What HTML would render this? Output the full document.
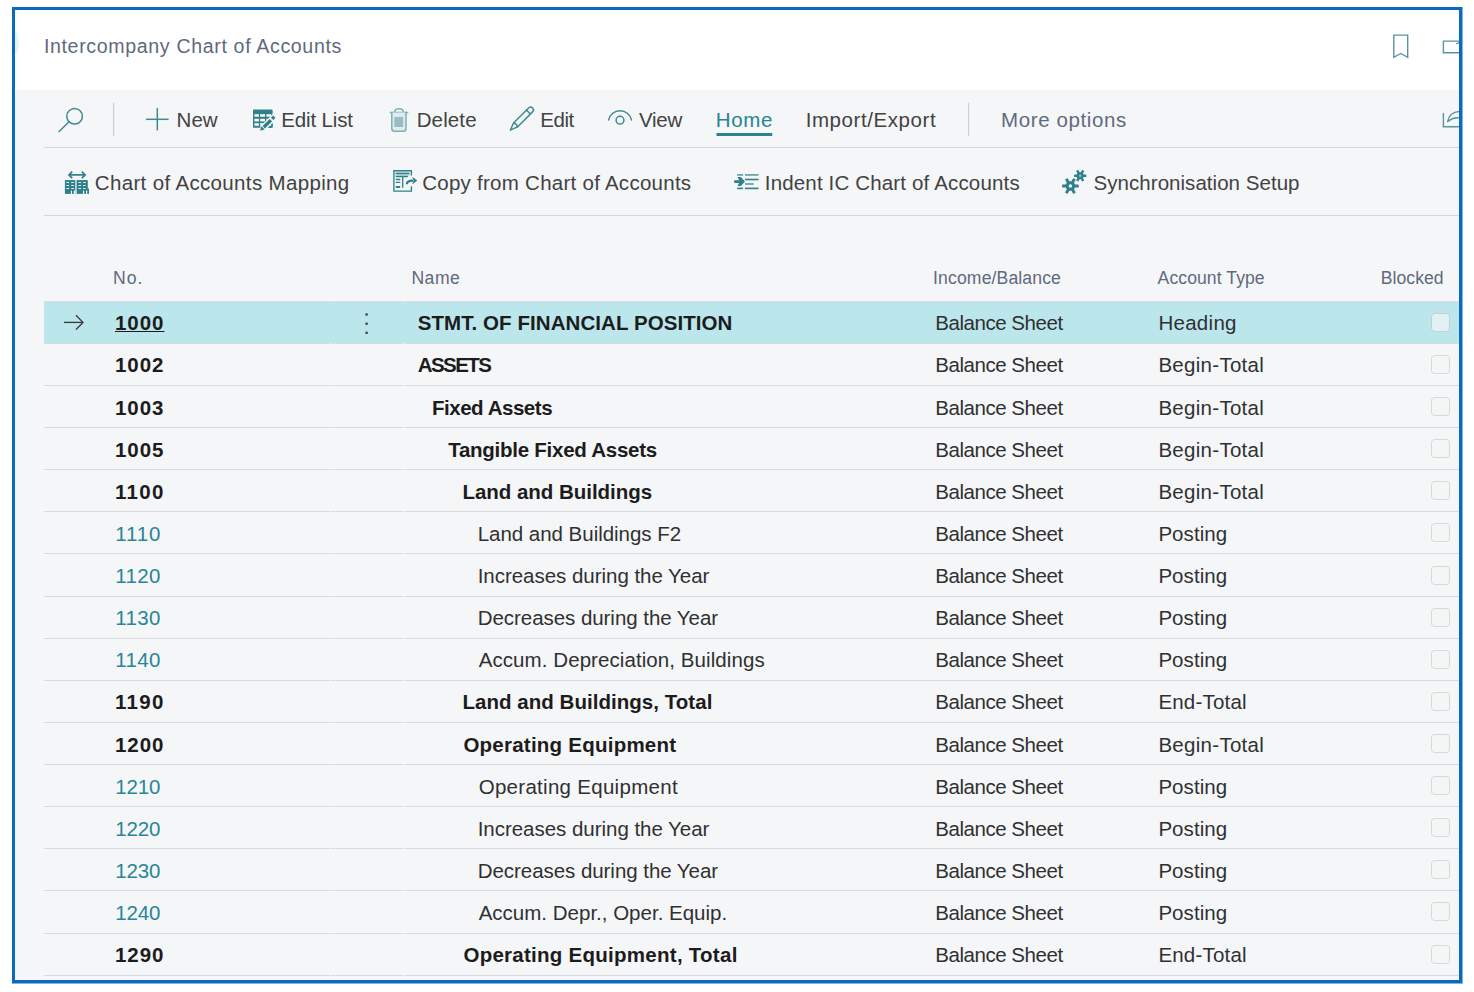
<!DOCTYPE html><html lang="en"><head><meta charset="utf-8"><title>Intercompany Chart of Accounts</title>
<style>
html,body{margin:0;padding:0;background:#fff;}
body{width:1474px;height:992px;position:relative;overflow:hidden;font-family:"Liberation Sans", sans-serif;}
.t{position:absolute;white-space:nowrap;line-height:24px;font-family:"Liberation Sans", sans-serif;}
#grey{position:absolute;left:15px;top:90px;width:1444px;height:891px;background:#f5f6f8;}
.hl{position:absolute;left:44px;width:1415px;height:1px;background:#d9dbe0;}
.gap{position:absolute;width:1px;background:#f5f6f8;}
#sel{position:absolute;left:44px;top:302px;width:1415px;height:41px;background:#bbe6ec;}
.cb{position:absolute;left:1431px;width:17px;height:17px;border:1px solid #d6d9d9;border-radius:3.5px;background:#f4f5f5;}
#svg{position:absolute;left:0;top:0;}
#frame{position:absolute;left:12px;top:7px;width:1444px;height:970px;border:3px solid #0a6abd;}
.aa{position:absolute;background:rgba(10,106,189,.5);}
.mask{position:absolute;background:#fff;}
</style></head><body>
<div id="grey"></div>
<div id="sel"></div>
<div class="hl" style="top:147px;background:#d3d6dc"></div>
<div class="hl" style="top:215px;background:#d3d6dc"></div>
<div class="hl" style="top:301px"></div>
<div class="hl" style="top:343px"></div>
<div class="hl" style="top:385px"></div>
<div class="hl" style="top:427px"></div>
<div class="hl" style="top:469px"></div>
<div class="hl" style="top:511px"></div>
<div class="hl" style="top:553px"></div>
<div class="hl" style="top:596px"></div>
<div class="hl" style="top:638px"></div>
<div class="hl" style="top:680px"></div>
<div class="hl" style="top:722px"></div>
<div class="hl" style="top:764px"></div>
<div class="hl" style="top:806px"></div>
<div class="hl" style="top:848px"></div>
<div class="hl" style="top:890px"></div>
<div class="hl" style="top:933px"></div>
<div class="hl" style="top:975px"></div>
<div class="gap" style="left:330px;top:301px;height:1px"></div>
<div class="gap" style="left:330px;top:343px;height:634px"></div>
<div class="gap" style="left:404px;top:301px;height:1px"></div>
<div class="gap" style="left:404px;top:343px;height:634px"></div>
<svg id="svg" width="1474" height="992" viewBox="0 0 1474 992" fill="none" stroke-linecap="round" stroke-linejoin="round"><path d="M15,31.5 A3.8,11.5 0 0 1 15,54.5 Z" fill="#e4f3f5"/><line x1="113.6" y1="102.5" x2="113.6" y2="136" stroke="#ced1d8" stroke-width="1.3" stroke-linecap="butt"/><line x1="968.6" y1="102.5" x2="968.6" y2="136" stroke="#ced1d8" stroke-width="1.3" stroke-linecap="butt"/><g stroke="#3f8992" stroke-width="1.5"><circle cx="74.6" cy="116.2" r="7.8"/><line x1="69.1" y1="121.8" x2="59.1" y2="131.5"/></g><g stroke="#3f8992" stroke-width="1.5" stroke-linecap="butt"><line x1="146.1" y1="119.3" x2="168.6" y2="119.3"/><line x1="157.3" y1="108.1" x2="157.3" y2="130.5"/></g><rect x="253" y="109.5" width="19.6" height="18.3" rx="0.9" fill="#2f808a"/><rect x="254.4" y="114.2" width="4.50" height="2.50" fill="#fbfdfd"/><rect x="254.4" y="118.8" width="4.50" height="2.60" fill="#fbfdfd"/><rect x="254.4" y="123.2" width="4.50" height="2.60" fill="#fbfdfd"/><rect x="260.2" y="114.2" width="4.80" height="2.50" fill="#fbfdfd"/><rect x="260.2" y="118.8" width="4.80" height="2.60" fill="#fbfdfd"/><rect x="260.2" y="123.2" width="4.80" height="2.60" fill="#fbfdfd"/><rect x="266.4" y="114.2" width="4.80" height="2.50" fill="#fbfdfd"/><rect x="266.4" y="118.8" width="4.80" height="2.60" fill="#fbfdfd"/><rect x="266.4" y="123.2" width="4.80" height="2.60" fill="#fbfdfd"/><line x1="262" y1="129" x2="275" y2="116.2" stroke="#f5f6f8" stroke-width="6.0" stroke-linecap="butt"/><line x1="263.7" y1="127.2" x2="270.9" y2="120.1" stroke="#2f808a" stroke-width="3.4" stroke-linecap="butt"/><line x1="272.1" y1="118.9" x2="274.3" y2="116.7" stroke="#2f808a" stroke-width="3.4" stroke-linecap="butt"/><polygon points="260.2,130.7 261.4,126.3 264.6,129.5" fill="#2f808a"/><path d="M270.4,127.3 C271.8,127.1 272.3,126.4 272.3,125.2" stroke="#2f808a" stroke-width="1.5"/><g stroke="#7db0b7" stroke-width="1.5"><line x1="390.3" y1="112.6" x2="407.6" y2="112.6"/><path d="M394.4,112.4 C395,107.6 403,107.6 403.6,112.4"/><path d="M391.8,112.6 V128.4 Q391.8,131.2 394.6,131.2 H403.2 Q406,131.2 406,128.4 V112.6" fill="#e2ecee"/></g><rect x="394.3" y="116.9" width="8.9" height="10.1" fill="#97bec4"/><g stroke="#3f8992" stroke-width="1.45" transform="translate(510.3 130.2) rotate(-45)"><path d="M0,0 L7.4,-2.8 H28.7 A2.8,2.8 0 0 1 28.7,2.8 H7.4 Z"/><path d="M7.4,-2.8 Q9.4,0 7.4,2.8"/><line x1="25.6" y1="-2.8" x2="25.6" y2="2.8"/></g><g stroke="#3f8992" stroke-width="1.5"><path d="M608.7,119.9 A11.6,11.6 0 0 1 631.4,119.9"/><circle cx="620" cy="120.2" r="3.9"/></g><rect x="716.5" y="133" width="55.7" height="3" fill="#2a8390"/><g stroke="#2f808a" stroke-width="1.7" stroke-linecap="butt" stroke-linejoin="miter"><line x1="69.5" y1="174.9" x2="84.5" y2="174.9"/><polyline points="72.2,171.6 68.9,174.9 72.2,178.2"/><polyline points="81.8,171.6 85.1,174.9 81.8,178.2"/></g><rect x="64.9" y="180.1" width="10.4" height="13.8" fill="#2f808a"/><rect x="76.6" y="180.1" width="11.2" height="13.8" fill="#2f808a"/><rect x="87.3" y="188.5" width="1.7" height="5.4" fill="#2f808a"/><rect x="66.3" y="182.1" width="2.80" height="1" rx="0.5" fill="#e9f1f2"/><rect x="66.3" y="185.0" width="2.80" height="1" rx="0.5" fill="#e9f1f2"/><rect x="66.3" y="188.1" width="2.80" height="1" rx="0.5" fill="#e9f1f2"/><rect x="71.1" y="182.1" width="2.90" height="1" rx="0.5" fill="#e9f1f2"/><rect x="71.1" y="185.0" width="2.90" height="1" rx="0.5" fill="#e9f1f2"/><rect x="71.1" y="188.1" width="2.90" height="1" rx="0.5" fill="#e9f1f2"/><rect x="78.4" y="182.1" width="2.80" height="1" rx="0.5" fill="#e9f1f2"/><rect x="78.4" y="185.0" width="2.80" height="1" rx="0.5" fill="#e9f1f2"/><rect x="78.4" y="188.1" width="2.80" height="1" rx="0.5" fill="#e9f1f2"/><rect x="83.0" y="182.1" width="2.80" height="1" rx="0.5" fill="#e9f1f2"/><rect x="83.0" y="185.0" width="2.80" height="1" rx="0.5" fill="#e9f1f2"/><rect x="83.0" y="188.1" width="2.80" height="1" rx="0.5" fill="#e9f1f2"/><rect x="70.9" y="190.6" width="1.10" height="3.4" fill="#f5f6f8"/><rect x="73.8" y="190.6" width="1.60" height="3.4" fill="#f5f6f8"/><rect x="83.0" y="190.6" width="1.20" height="3.4" fill="#f5f6f8"/><rect x="86.0" y="190.6" width="1.20" height="3.4" fill="#f5f6f8"/><rect x="395" y="171.4" width="15" height="5" fill="#cfe1e4"/><g stroke="#2f808a" stroke-width="1.35" stroke-linecap="butt" stroke-linejoin="miter"><path d="M411.4,175.6 V170.7 H393.9 V191.1 H411.4 V186.2"/></g><g stroke="#2f808a" stroke-width="1.3"><line x1="396.3" y1="173.5" x2="408.8" y2="173.5"/><line x1="396.3" y1="176.5" x2="407.3" y2="176.5"/><line x1="402.7" y1="176.5" x2="402.7" y2="187.3"/><line x1="396.3" y1="179.5" x2="399.8" y2="179.5"/><line x1="396.3" y1="182.4" x2="399.8" y2="182.4"/></g><rect x="395.8" y="186" width="4.4" height="2" rx="0.5" fill="#2f808a"/><path d="M406.8,184.2 C407,181.2 409.6,180.5 413,180.6" stroke="#2f808a" stroke-width="2.2" stroke-linecap="butt"/><polygon points="412.2,176.8 417.3,180.6 412.2,184.5 413.6,180.6" fill="#2f808a"/><g stroke="#2f808a" stroke-width="1.6" stroke-linecap="butt"><line x1="737.1" y1="174.9" x2="743.1" y2="174.9" stroke="#5d9aa2"/><line x1="745" y1="174.9" x2="758.5" y2="174.9" stroke="#5d9aa2"/><line x1="745" y1="179.5" x2="758.5" y2="179.5"/><line x1="745" y1="184" x2="753.8" y2="184" stroke="#5d9aa2"/><line x1="737.1" y1="188.4" x2="743.1" y2="188.4"/><line x1="745" y1="188.4" x2="758.5" y2="188.4"/></g><line x1="734.2" y1="181.6" x2="741" y2="181.6" stroke="#2f808a" stroke-width="2.8" stroke-linecap="butt"/><polygon points="737.6,177.1 740.8,177.1 745,181.6 740.8,186.1 737.6,186.1 739.8,181.6" fill="#2f808a"/><rect x="1062.10" y="184.55" width="16.60" height="2.90" rx="0.5" fill="#2f808a" transform="rotate(0 1070.4 186.0)"/><rect x="1062.10" y="184.55" width="16.60" height="2.90" rx="0.5" fill="#2f808a" transform="rotate(60 1070.4 186.0)"/><rect x="1062.10" y="184.55" width="16.60" height="2.90" rx="0.5" fill="#2f808a" transform="rotate(120 1070.4 186.0)"/><circle cx="1070.4" cy="186.0" r="4.8" fill="#2f808a"/><circle cx="1070.4" cy="186.0" r="1.7" fill="#f5f6f8"/><rect x="1074.10" y="174.50" width="12.20" height="2.40" rx="0.5" fill="#2f808a" transform="rotate(0 1080.2 175.7)"/><rect x="1074.10" y="174.50" width="12.20" height="2.40" rx="0.5" fill="#2f808a" transform="rotate(60 1080.2 175.7)"/><rect x="1074.10" y="174.50" width="12.20" height="2.40" rx="0.5" fill="#2f808a" transform="rotate(120 1080.2 175.7)"/><circle cx="1080.2" cy="175.7" r="3.5" fill="#2f808a"/><circle cx="1080.2" cy="175.7" r="1.3" fill="#8fbcc2"/><path d="M1393.8,35.1 H1407.7 V57.4 L1400.75,53.5 L1393.8,57.4 Z" stroke="#5b949c" stroke-width="1.4" stroke-linejoin="miter"/><path d="M1459.5,41.1 H1443.4 V52.8 H1459.5" stroke="#5b949c" stroke-width="1.4" stroke-linejoin="miter" stroke-linecap="butt"/><path d="M1456.5,43.6 L1459.5,42.6" stroke="#5b949c" stroke-width="1.2"/><path d="M1443.4,113 V126.8 H1459.5" stroke="#5b949c" stroke-width="1.4" stroke-linejoin="miter" stroke-linecap="butt"/><path d="M1447.7,121.5 C1448.6,116 1452.5,112 1459.5,111.4" stroke="#5b949c" stroke-width="1.4"/><path d="M1447.7,121.5 C1451,118.8 1455,117.2 1459.5,118" stroke="#5b949c" stroke-width="1.4"/><g stroke="#3a3a3a" stroke-width="1.35" stroke-linecap="butt" stroke-linejoin="miter"><line x1="63.9" y1="322.4" x2="82.6" y2="322.4"/><polyline points="76,315.3 83,322.4 76,329.5"/></g><rect x="365.5" y="313.4" width="2.2" height="2.2" fill="#333"/><rect x="365.5" y="322.6" width="2.2" height="2.2" fill="#333"/><rect x="365.5" y="331.7" width="2.2" height="2.2" fill="#333"/></svg>
<header><span class="t" style="left:43.90px;top:34.30px;font-size:19.6px;letter-spacing:0.642px;color:#5e6a7e;">Intercompany Chart of Accounts</span></header>
<nav class="actions"><span class="t" style="left:176.60px;top:108.30px;font-size:20.5px;letter-spacing:-0.003px;color:#424242;">New</span><span class="t" style="left:281.30px;top:108.30px;font-size:20.5px;letter-spacing:-0.153px;color:#424242;">Edit List</span><span class="t" style="left:416.70px;top:108.30px;font-size:20.5px;letter-spacing:0.129px;color:#424242;">Delete</span><span class="t" style="left:540.20px;top:108.30px;font-size:20.5px;letter-spacing:-0.410px;color:#424242;">Edit</span><span class="t" style="left:639.00px;top:108.30px;font-size:20.5px;letter-spacing:-0.253px;color:#424242;">View</span><span class="t" style="left:715.80px;top:108.30px;font-size:20.5px;letter-spacing:0.639px;color:#2a8390;">Home</span><span class="t" style="left:805.70px;top:108.30px;font-size:20.5px;letter-spacing:0.571px;color:#424242;">Import/Export</span><span class="t" style="left:1001.00px;top:108.30px;font-size:20.5px;letter-spacing:0.613px;color:#5e6a7e;">More options</span></nav>
<nav class="actions2"><span class="t" style="left:94.80px;top:171.40px;font-size:20.5px;letter-spacing:0.347px;color:#424242;">Chart of Accounts Mapping</span><span class="t" style="left:422.20px;top:171.40px;font-size:20.5px;letter-spacing:0.264px;color:#424242;">Copy from Chart of Accounts</span><span class="t" style="left:764.80px;top:171.40px;font-size:20.5px;letter-spacing:0.159px;color:#424242;">Indent IC Chart of Accounts</span><span class="t" style="left:1093.60px;top:171.40px;font-size:20.5px;letter-spacing:0.039px;color:#424242;">Synchronisation Setup</span></nav>
<section class="grid">
<div class="head"><span class="t" style="left:113.10px;top:265.70px;font-size:17.6px;letter-spacing:0.905px;color:#5e6a7e;">No.</span><span class="t" style="left:411.40px;top:265.70px;font-size:17.6px;letter-spacing:0.518px;color:#5e6a7e;">Name</span><span class="t" style="left:933.10px;top:265.70px;font-size:17.6px;letter-spacing:0.125px;color:#5e6a7e;">Income/Balance</span><span class="t" style="left:1157.60px;top:265.70px;font-size:17.6px;letter-spacing:0.071px;color:#5e6a7e;">Account Type</span><span class="t" style="left:1380.80px;top:265.70px;font-size:17.6px;letter-spacing:0.032px;color:#5e6a7e;">Blocked</span></div>
<div class="row"><span class="t" style="left:115.00px;top:311.35px;font-size:20.5px;letter-spacing:0.966px;color:#1c1c1c;font-weight:700;text-decoration:underline;text-decoration-thickness:1.4px;text-underline-offset:1.3px;">1000</span><span class="t" style="left:417.70px;top:311.35px;font-size:20.5px;letter-spacing:0.074px;color:#1c1c1c;font-weight:700;">STMT. OF FINANCIAL POSITION</span><span class="t" style="left:935.30px;top:311.35px;font-size:20.5px;letter-spacing:-0.463px;color:#303030;">Balance Sheet</span><span class="t" style="left:1158.40px;top:311.35px;font-size:20.5px;letter-spacing:0.289px;color:#303030;">Heading</span><i class="cb" style="top:312.8px;background:#e2f1f3;border-color:#c3d0d2;"></i></div>
<div class="row"><span class="t" style="left:115.00px;top:353.47px;font-size:20.5px;letter-spacing:0.966px;color:#1c1c1c;font-weight:700;">1002</span><span class="t" style="left:417.70px;top:353.47px;font-size:20.5px;letter-spacing:-1.569px;color:#1c1c1c;font-weight:700;">ASSETS</span><span class="t" style="left:935.30px;top:353.47px;font-size:20.5px;letter-spacing:-0.463px;color:#303030;">Balance Sheet</span><span class="t" style="left:1158.40px;top:353.47px;font-size:20.5px;letter-spacing:0.289px;color:#303030;">Begin-Total</span><i class="cb" style="top:354.9px;"></i></div>
<div class="row"><span class="t" style="left:115.00px;top:395.59px;font-size:20.5px;letter-spacing:0.966px;color:#1c1c1c;font-weight:700;">1003</span><span class="t" style="left:431.95px;top:395.59px;font-size:20.5px;letter-spacing:-0.461px;color:#1c1c1c;font-weight:700;">Fixed Assets</span><span class="t" style="left:935.30px;top:395.59px;font-size:20.5px;letter-spacing:-0.463px;color:#303030;">Balance Sheet</span><span class="t" style="left:1158.40px;top:395.59px;font-size:20.5px;letter-spacing:0.289px;color:#303030;">Begin-Total</span><i class="cb" style="top:397.0px;"></i></div>
<div class="row"><span class="t" style="left:115.00px;top:437.71px;font-size:20.5px;letter-spacing:0.966px;color:#1c1c1c;font-weight:700;">1005</span><span class="t" style="left:448.20px;top:437.71px;font-size:20.5px;letter-spacing:-0.261px;color:#1c1c1c;font-weight:700;">Tangible Fixed Assets</span><span class="t" style="left:935.30px;top:437.71px;font-size:20.5px;letter-spacing:-0.463px;color:#303030;">Balance Sheet</span><span class="t" style="left:1158.40px;top:437.71px;font-size:20.5px;letter-spacing:0.289px;color:#303030;">Begin-Total</span><i class="cb" style="top:439.1px;"></i></div>
<div class="row"><span class="t" style="left:115.00px;top:479.83px;font-size:20.5px;letter-spacing:1.343px;color:#1c1c1c;font-weight:700;">1100</span><span class="t" style="left:462.45px;top:479.83px;font-size:20.5px;letter-spacing:-0.028px;color:#1c1c1c;font-weight:700;">Land and Buildings</span><span class="t" style="left:935.30px;top:479.83px;font-size:20.5px;letter-spacing:-0.463px;color:#303030;">Balance Sheet</span><span class="t" style="left:1158.40px;top:479.83px;font-size:20.5px;letter-spacing:0.289px;color:#303030;">Begin-Total</span><i class="cb" style="top:481.2px;"></i></div>
<div class="row"><span class="t" style="left:115.20px;top:521.95px;font-size:20.5px;letter-spacing:0.847px;color:#2a8596;">1110</span><span class="t" style="left:477.70px;top:521.95px;font-size:20.5px;letter-spacing:-0.030px;color:#303030;">Land and Buildings F2</span><span class="t" style="left:935.30px;top:521.95px;font-size:20.5px;letter-spacing:-0.463px;color:#303030;">Balance Sheet</span><span class="t" style="left:1158.40px;top:521.95px;font-size:20.5px;letter-spacing:0.054px;color:#303030;">Posting</span><i class="cb" style="top:523.4px;"></i></div>
<div class="row"><span class="t" style="left:115.20px;top:564.07px;font-size:20.5px;letter-spacing:0.339px;color:#2a8596;">1120</span><span class="t" style="left:477.70px;top:564.07px;font-size:20.5px;letter-spacing:-0.031px;color:#303030;">Increases during the Year</span><span class="t" style="left:935.30px;top:564.07px;font-size:20.5px;letter-spacing:-0.463px;color:#303030;">Balance Sheet</span><span class="t" style="left:1158.40px;top:564.07px;font-size:20.5px;letter-spacing:0.054px;color:#303030;">Posting</span><i class="cb" style="top:565.5px;"></i></div>
<div class="row"><span class="t" style="left:115.20px;top:606.19px;font-size:20.5px;letter-spacing:0.339px;color:#2a8596;">1130</span><span class="t" style="left:477.70px;top:606.19px;font-size:20.5px;letter-spacing:-0.048px;color:#303030;">Decreases during the Year</span><span class="t" style="left:935.30px;top:606.19px;font-size:20.5px;letter-spacing:-0.463px;color:#303030;">Balance Sheet</span><span class="t" style="left:1158.40px;top:606.19px;font-size:20.5px;letter-spacing:0.054px;color:#303030;">Posting</span><i class="cb" style="top:607.6px;"></i></div>
<div class="row"><span class="t" style="left:115.20px;top:648.31px;font-size:20.5px;letter-spacing:0.339px;color:#2a8596;">1140</span><span class="t" style="left:478.70px;top:648.31px;font-size:20.5px;letter-spacing:0.077px;color:#303030;">Accum. Depreciation, Buildings</span><span class="t" style="left:935.30px;top:648.31px;font-size:20.5px;letter-spacing:-0.463px;color:#303030;">Balance Sheet</span><span class="t" style="left:1158.40px;top:648.31px;font-size:20.5px;letter-spacing:0.054px;color:#303030;">Posting</span><i class="cb" style="top:649.7px;"></i></div>
<div class="row"><span class="t" style="left:115.00px;top:690.43px;font-size:20.5px;letter-spacing:1.343px;color:#1c1c1c;font-weight:700;">1190</span><span class="t" style="left:462.45px;top:690.43px;font-size:20.5px;letter-spacing:0.036px;color:#1c1c1c;font-weight:700;">Land and Buildings, Total</span><span class="t" style="left:935.30px;top:690.43px;font-size:20.5px;letter-spacing:-0.463px;color:#303030;">Balance Sheet</span><span class="t" style="left:1158.40px;top:690.43px;font-size:20.5px;letter-spacing:0.194px;color:#303030;">End-Total</span><i class="cb" style="top:691.8px;"></i></div>
<div class="row"><span class="t" style="left:115.00px;top:732.55px;font-size:20.5px;letter-spacing:0.966px;color:#1c1c1c;font-weight:700;">1200</span><span class="t" style="left:463.45px;top:732.55px;font-size:20.5px;letter-spacing:0.234px;color:#1c1c1c;font-weight:700;">Operating Equipment</span><span class="t" style="left:935.30px;top:732.55px;font-size:20.5px;letter-spacing:-0.463px;color:#303030;">Balance Sheet</span><span class="t" style="left:1158.40px;top:732.55px;font-size:20.5px;letter-spacing:0.289px;color:#303030;">Begin-Total</span><i class="cb" style="top:734.0px;"></i></div>
<div class="row"><span class="t" style="left:115.20px;top:774.67px;font-size:20.5px;letter-spacing:-0.168px;color:#2a8596;">1210</span><span class="t" style="left:478.70px;top:774.67px;font-size:20.5px;letter-spacing:0.287px;color:#303030;">Operating Equipment</span><span class="t" style="left:935.30px;top:774.67px;font-size:20.5px;letter-spacing:-0.463px;color:#303030;">Balance Sheet</span><span class="t" style="left:1158.40px;top:774.67px;font-size:20.5px;letter-spacing:0.054px;color:#303030;">Posting</span><i class="cb" style="top:776.1px;"></i></div>
<div class="row"><span class="t" style="left:115.20px;top:816.79px;font-size:20.5px;letter-spacing:-0.168px;color:#2a8596;">1220</span><span class="t" style="left:477.70px;top:816.79px;font-size:20.5px;letter-spacing:-0.031px;color:#303030;">Increases during the Year</span><span class="t" style="left:935.30px;top:816.79px;font-size:20.5px;letter-spacing:-0.463px;color:#303030;">Balance Sheet</span><span class="t" style="left:1158.40px;top:816.79px;font-size:20.5px;letter-spacing:0.054px;color:#303030;">Posting</span><i class="cb" style="top:818.2px;"></i></div>
<div class="row"><span class="t" style="left:115.20px;top:858.91px;font-size:20.5px;letter-spacing:-0.168px;color:#2a8596;">1230</span><span class="t" style="left:477.70px;top:858.91px;font-size:20.5px;letter-spacing:-0.048px;color:#303030;">Decreases during the Year</span><span class="t" style="left:935.30px;top:858.91px;font-size:20.5px;letter-spacing:-0.463px;color:#303030;">Balance Sheet</span><span class="t" style="left:1158.40px;top:858.91px;font-size:20.5px;letter-spacing:0.054px;color:#303030;">Posting</span><i class="cb" style="top:860.3px;"></i></div>
<div class="row"><span class="t" style="left:115.20px;top:901.03px;font-size:20.5px;letter-spacing:-0.168px;color:#2a8596;">1240</span><span class="t" style="left:478.70px;top:901.03px;font-size:20.5px;letter-spacing:0.004px;color:#303030;">Accum. Depr., Oper. Equip.</span><span class="t" style="left:935.30px;top:901.03px;font-size:20.5px;letter-spacing:-0.463px;color:#303030;">Balance Sheet</span><span class="t" style="left:1158.40px;top:901.03px;font-size:20.5px;letter-spacing:0.054px;color:#303030;">Posting</span><i class="cb" style="top:902.4px;"></i></div>
<div class="row"><span class="t" style="left:115.00px;top:943.15px;font-size:20.5px;letter-spacing:0.966px;color:#1c1c1c;font-weight:700;">1290</span><span class="t" style="left:463.45px;top:943.15px;font-size:20.5px;letter-spacing:0.265px;color:#1c1c1c;font-weight:700;">Operating Equipment, Total</span><span class="t" style="left:935.30px;top:943.15px;font-size:20.5px;letter-spacing:-0.463px;color:#303030;">Balance Sheet</span><span class="t" style="left:1158.40px;top:943.15px;font-size:20.5px;letter-spacing:0.194px;color:#303030;">End-Total</span><i class="cb" style="top:944.5px;"></i></div>
</section>
<div class="mask" style="left:1462px;top:0;width:12px;height:992px"></div>
<div class="mask" style="left:0;top:983px;width:1474px;height:9px"></div>
<div id="frame"></div>
<div class="aa" style="left:1462px;top:7px;width:1px;height:976px"></div>
<div class="aa" style="left:12px;top:983px;width:1451px;height:1px"></div>
</body></html>
